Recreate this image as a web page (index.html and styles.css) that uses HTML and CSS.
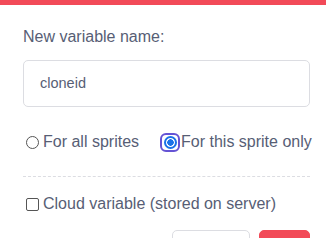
FILE: index.html
```html
<!DOCTYPE html>
<html lang="en">
<head>
    <meta charset="UTF-8">
    <title>New Variable</title>
    <link rel="stylesheet" href="styles.css">
</head>
<body>
    <div class="header-bar"></div>
    <div class="prompt-body">
        <div class="label">New variable name:</div>
        <div class="input-box">cloneid</div>
        <div class="options">
            <label class="option"><span class="radio"></span>For all sprites</label>
            <label class="option option-selected"><span class="focus-ring"><span class="radio radio-checked"></span></span>For this sprite only</label>
        </div>
        <div class="divider"></div>
        <label class="option cloud-option"><span class="checkbox"></span>Cloud variable (stored on server)</label>
        <div class="button-row">
            <button class="btn btn-cancel">Cancel</button>
            <button class="btn btn-ok">OK</button>
        </div>
    </div>
</body>
</html>
```

FILE: styles.css
```css
* {
    margin: 0;
    padding: 0;
    box-sizing: border-box;
}

body {
    font-family: 'Liberation Sans', Arial, sans-serif;
    font-size: 16px;
    color: #575e75;
    background-color: #ffffff;
    overflow: hidden;
}

.header-bar {
    height: 5px;
    background-color: #f24a58;
}

.prompt-body {
    padding: 22px 16px 0 23px;
}

.label {
    line-height: 20px;
    height: 20px;
}

.input-box {
    margin-top: 13px;
    height: 47px;
    border: 1px solid #dcdde2;
    border-radius: 5px;
    padding: 0 16px;
    line-height: 45px;
    font-size: 14.5px;
}

.options {
    display: flex;
    align-items: center;
    margin-top: 25px;
    height: 20px;
    white-space: nowrap;
}

.option {
    display: flex;
    align-items: center;
    flex-shrink: 0;
    line-height: 20px;
    white-space: nowrap;
}

.option-selected {
    margin-left: 21px;
}

.radio {
    display: inline-block;
    flex-shrink: 0;
    width: 13px;
    height: 13px;
    border: 1px solid #555;
    border-radius: 50%;
    margin: 0 4px 0 3px;
    background: #fff;
}

.focus-ring {
    display: inline-flex;
    flex-shrink: 0;
    align-items: center;
    justify-content: center;
    width: 20px;
    height: 19px;
    border: 2px solid #6553d4;
    border-radius: 6px;
    margin-right: 1px;
}

.radio-checked {
    margin: 0;
    width: 13px;
    height: 13px;
    border: 2px solid #1a73e8;
    background: radial-gradient(circle, #1a73e8 0, #1a73e8 3px, #ffffff 3.5px);
}

.divider {
    margin-top: 24px;
    border-top: 1px dashed #dcdde2;
}

.cloud-option {
    margin-top: 17px;
}

.checkbox {
    display: inline-block;
    flex-shrink: 0;
    width: 13px;
    height: 13px;
    border: 1px solid #555;
    border-radius: 2px;
    margin: 0 4px 0 3px;
}

.button-row {
    display: flex;
    justify-content: flex-end;
    gap: 9px;
    margin-top: 16px;
}

.btn {
    font-family: inherit;
    font-size: 14px;
    font-weight: bold;
    height: 36px;
    padding: 0 12px;
    border-radius: 5px;
    cursor: pointer;
}

.btn-cancel {
    width: 78px;
    background-color: #ffffff;
    border: 1px solid #dcdde2;
    color: #575e75;
}

.btn-ok {
    width: 51px;
    background-color: #f24a58;
    border: 1px solid #f24a58;
    color: #ffffff;
}
```
